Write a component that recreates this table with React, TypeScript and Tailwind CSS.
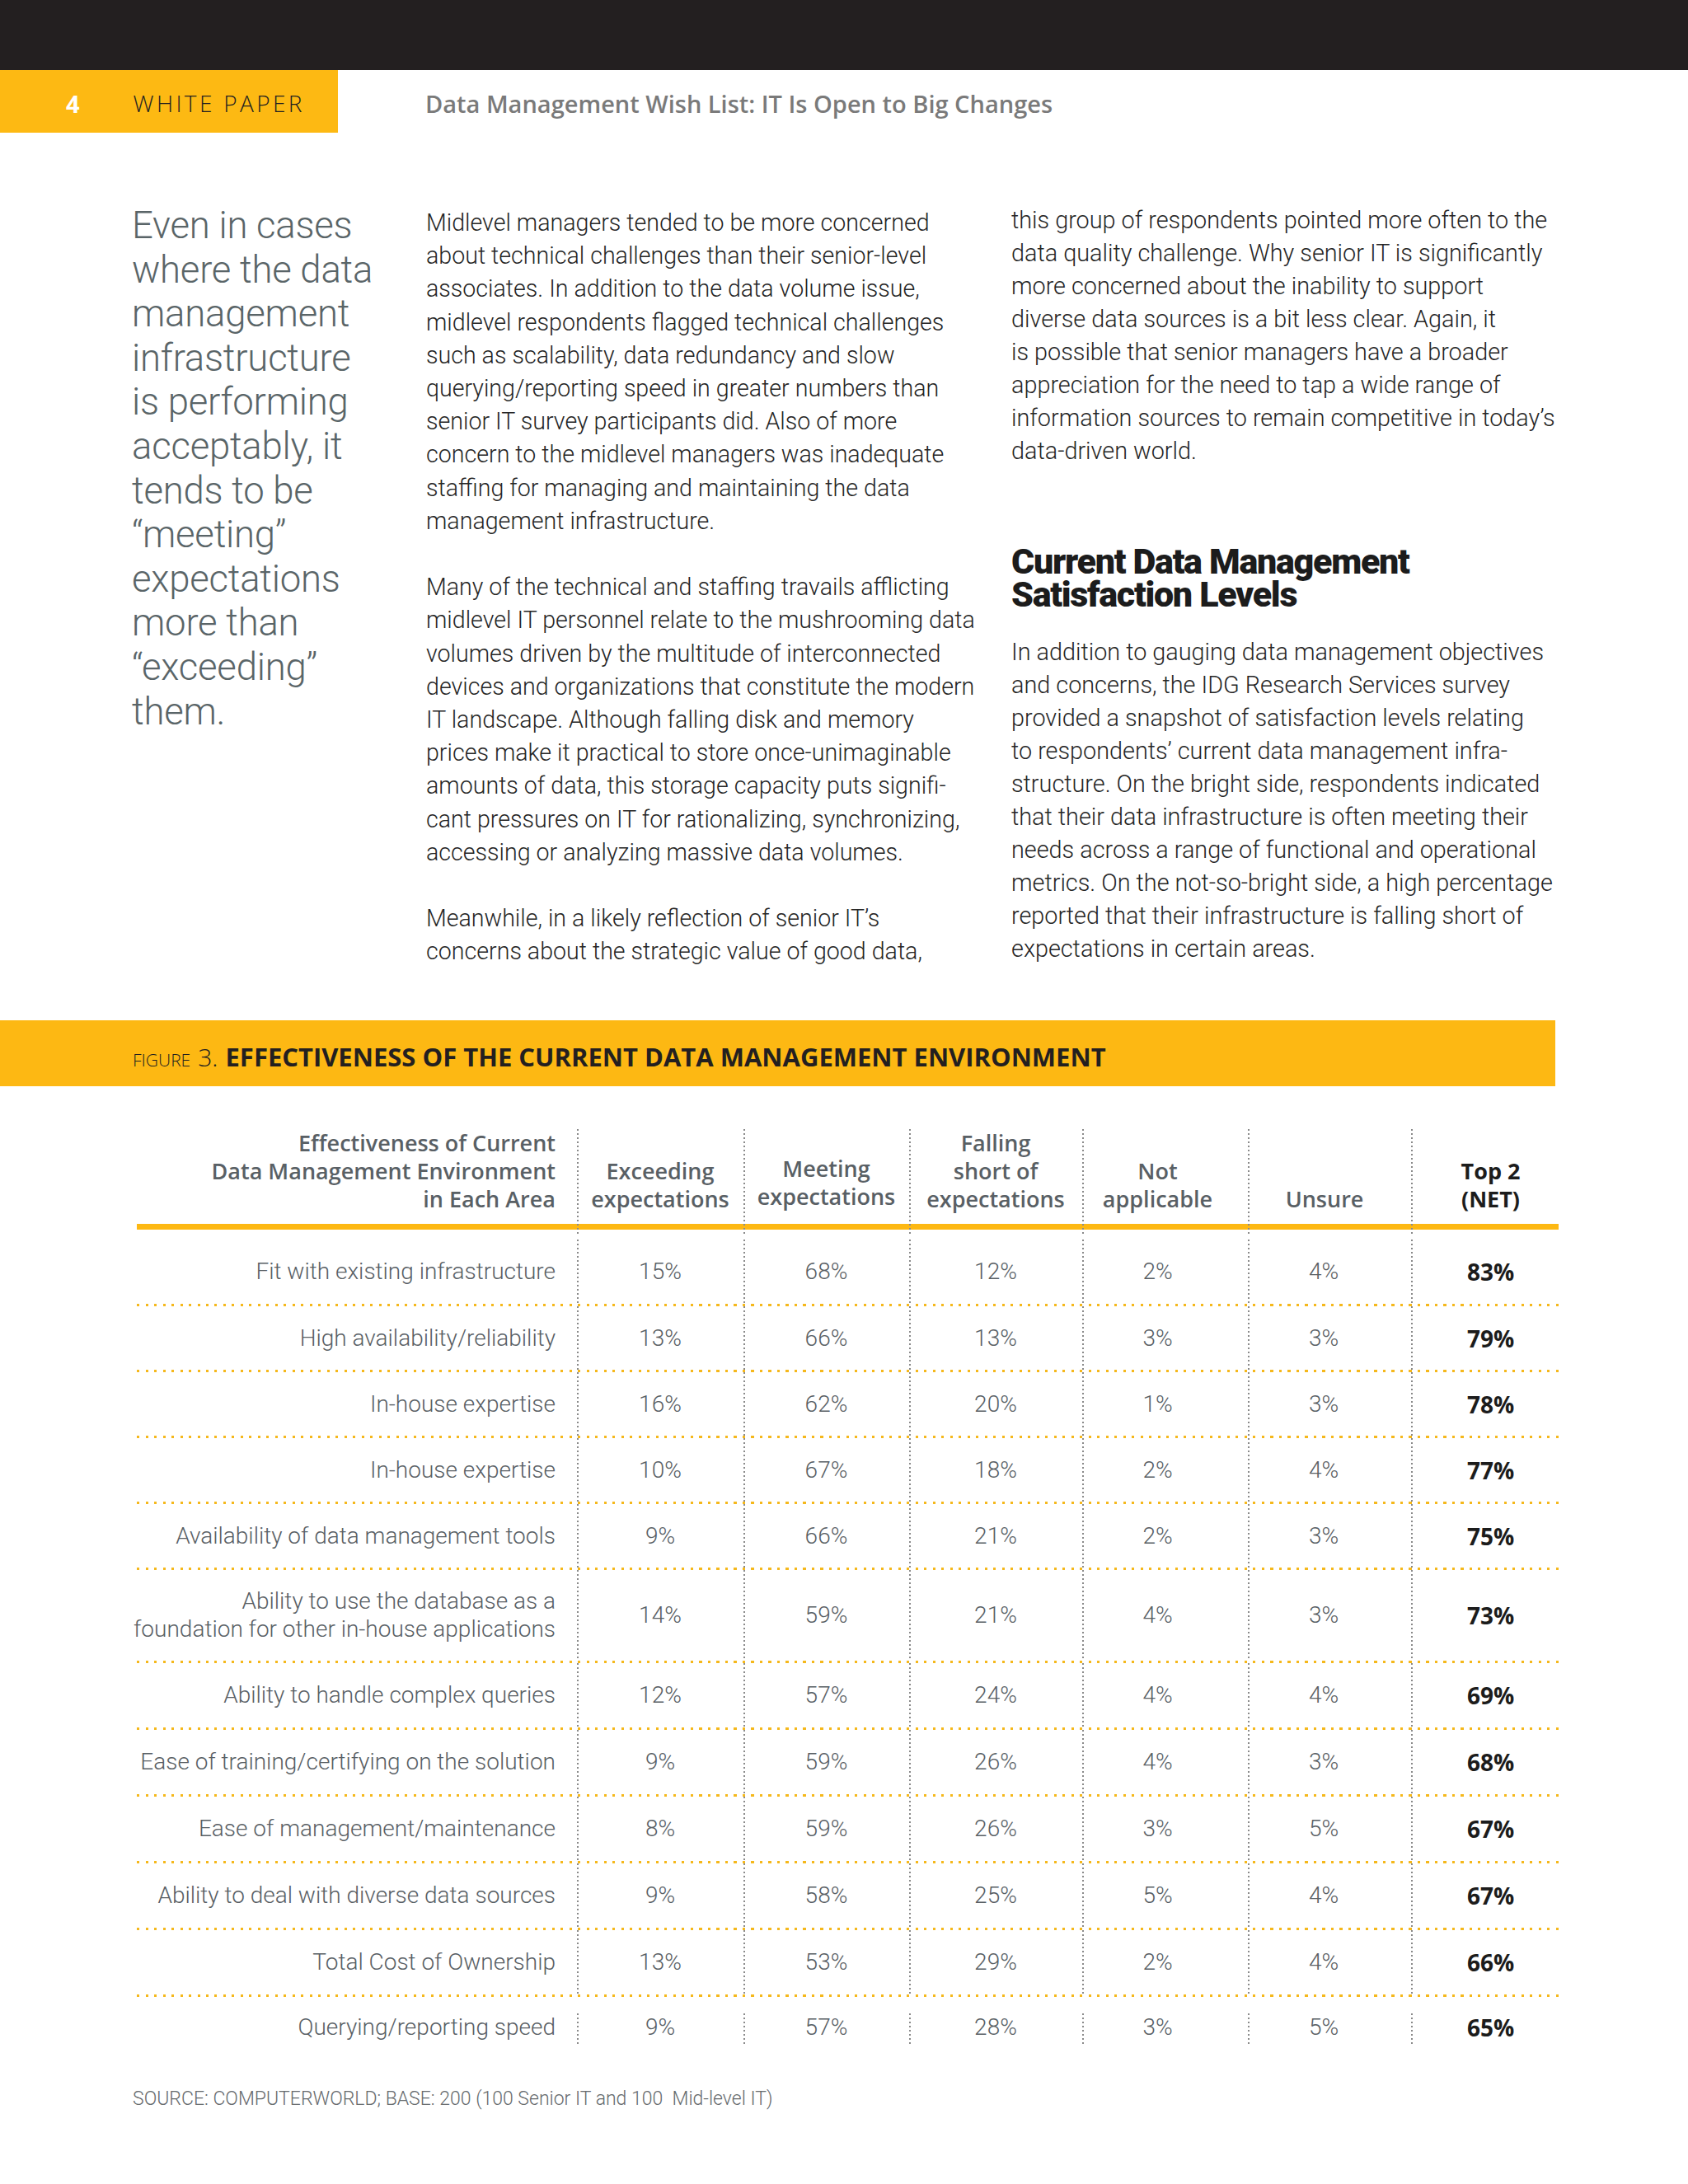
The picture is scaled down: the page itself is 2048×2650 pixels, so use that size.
import React from "react";

const pullQuote = [
  "Even in cases",
  "where the data",
  "management",
  "infrastructure",
  "is performing",
  "acceptably, it",
  "tends to be",
  "\u201Cmeeting\u201D",
  "expectations",
  "more than",
  "\u201Cexceeding\u201D",
  "them.",
];

const col2 = [
  [
    "Midlevel managers tended to be more concerned",
    "about technical challenges than their senior-level",
    "associates. In addition to the data volume issue,",
    "midlevel respondents flagged technical challenges",
    "such as scalability, data redundancy and slow",
    "querying/reporting speed in greater numbers than",
    "senior IT survey participants did. Also of more",
    "concern to the midlevel managers was inadequate",
    "staffing for managing and maintaining the data",
    "management infrastructure.",
  ],
  [
    "Many of the technical and staffing travails afflicting",
    "midlevel IT personnel relate to the mushrooming data",
    "volumes driven by the multitude of interconnected",
    "devices and organizations that constitute the modern",
    "IT landscape. Although falling disk and memory",
    "prices make it practical to store once-unimaginable",
    "amounts of data, this storage capacity puts signifi-",
    "cant pressures on IT for rationalizing, synchronizing,",
    "accessing or analyzing massive data volumes.",
  ],
  [
    "Meanwhile, in a likely reflection of senior IT\u2019s",
    "concerns about the strategic value of good data,",
  ],
];

const col3a = [
  "this group of respondents pointed more often to the",
  "data quality challenge. Why senior IT is significantly",
  "more concerned about the inability to support",
  "diverse data sources is a bit less clear. Again, it",
  "is possible that senior managers have a broader",
  "appreciation for the need to tap a wide range of",
  "information sources to remain competitive in today\u2019s",
  "data-driven world.",
];

const col3b = [
  "In addition to gauging data management objectives",
  "and concerns, the IDG Research Services survey",
  "provided a snapshot of satisfaction levels relating",
  "to respondents\u2019 current data management infra-",
  "structure. On the bright side, respondents indicated",
  "that their data infrastructure is often meeting their",
  "needs across a range of functional and operational",
  "metrics. On the not-so-bright side, a high percentage",
  "reported that their infrastructure is falling short of",
  "expectations in certain areas.",
];

type Row = { label: string[]; v: string[]; top: string; h: string };

const rows: Row[] = [
  { label: ["Fit with existing infrastructure"], v: ["15%", "68%", "12%", "2%", "4%"], top: "83%", h: "h-[90px] pt-[12px]" },
  { label: ["High availability/reliability"], v: ["13%", "66%", "13%", "3%", "3%"], top: "79%", h: "h-[77px]" },
  { label: ["In-house expertise"], v: ["16%", "62%", "20%", "1%", "3%"], top: "78%", h: "h-[77px]" },
  { label: ["In-house expertise"], v: ["10%", "67%", "18%", "2%", "4%"], top: "77%", h: "h-[77px]" },
  { label: ["Availability of data management tools"], v: ["9%", "66%", "21%", "2%", "3%"], top: "75%", h: "h-[77px]" },
  { label: ["Ability to use the database as a", "foundation for other in-house applications"], v: ["14%", "59%", "21%", "4%", "3%"], top: "73%", h: "h-[110px]" },
  { label: ["Ability to handle complex queries"], v: ["12%", "57%", "24%", "4%", "4%"], top: "69%", h: "h-[78px]" },
  { label: ["Ease of training/certifying on the solution"], v: ["9%", "59%", "26%", "4%", "3%"], top: "68%", h: "h-[78px]" },
  { label: ["Ease of management/maintenance"], v: ["8%", "59%", "26%", "3%", "5%"], top: "67%", h: "h-[78px]" },
  { label: ["Ability to deal with diverse data sources"], v: ["9%", "58%", "25%", "5%", "4%"], top: "67%", h: "h-[78px]" },
  { label: ["Total Cost of Ownership"], v: ["13%", "53%", "29%", "2%", "4%"], top: "66%", h: "h-[78px]" },
  { label: ["Querying/reporting speed"], v: ["9%", "57%", "28%", "3%", "5%"], top: "65%", h: "h-[59px] items-start pt-[20px]" },
];

const GRID = "grid grid-cols-[534px_202px_201px_210px_201px_198px_179px]";
const VLINE =
  "bg-[image:repeating-linear-gradient(to_bottom,#8a8a8a_0_2px,transparent_2px_5px)] bg-[length:2px_100%] bg-no-repeat bg-left";
const valShift = ["", "", "", "pr-[18px]", "pr-[14px]"];

function DottedRule() {
  return (
    <div className="h-[3px] w-full bg-[image:repeating-linear-gradient(to_right,#f5b81c_0_3px,transparent_3px_10.5px)]" />
  );
}

export default function App() {
  return (
    <div className="w-[2048px] h-[2650px] bg-white overflow-hidden font-['Roboto',sans-serif]">
      {/* top dark bar */}
      <div className="h-[85px] bg-[#231f20]" />

      {/* header row */}
      <div className="flex h-[76px]">
        <div className="w-[410px] h-full bg-[#fdb913] flex items-center pt-[4px]">
          <span className="ml-[80px] text-white font-['Open_Sans',sans-serif] font-bold text-[29px] leading-none">4</span>
          <span className="ml-[65px] text-[#231f20] font-['Open_Sans',sans-serif] font-light text-[28px] tracking-[0.12em] leading-none">
            WHITE PAPER
          </span>
        </div>
        <div className="ml-[106px] flex items-center pt-[4px] text-[#7a7a7a] font-['Open_Sans',sans-serif] font-semibold text-[29px] leading-none">
          Data Management Wish List: IT Is Open to Big Changes
        </div>
      </div>

      {/* body columns */}
      <div className="flex h-[1077px]">
        <div className="w-[517px] pl-[160px] pt-[86px] text-[#5a6568] font-light text-[45.5px] leading-[53.6px] tracking-[-0.005em] whitespace-nowrap">
          {pullQuote.map((l, i) => (
            <div key={i}>{l}</div>
          ))}
        </div>

        <div className="w-[710px] pt-[89px] text-[#262626] font-light text-[28.6px] leading-[40.2px] whitespace-nowrap">
          {col2.map((p, pi) => (
            <div key={pi} className={pi > 0 ? "mt-[40.2px]" : ""}>
              {p.map((l, i) => (
                <div key={i}>{l}</div>
              ))}
            </div>
          ))}
        </div>

        <div className="pt-[86px] text-[#262626] font-light text-[28.8px] leading-[40px] whitespace-nowrap">
          <div>
            {col3a.map((l, i) => (
              <div key={i}>{l}</div>
            ))}
          </div>
          <div className="mt-[94px] text-[#1c1c1c] font-black text-[43px] leading-[40px] tracking-[-0.03em]">
            <div>Current Data Management</div>
            <div>Satisfaction Levels</div>
          </div>
          <div className="mt-[30px]">
            {col3b.map((l, i) => (
              <div key={i}>{l}</div>
            ))}
          </div>
        </div>
      </div>

      {/* figure bar */}
      <div className="w-[1887px] h-[80px] bg-[#fdb813] flex items-center pl-[161px] pt-[8px]">
        <div className="flex items-baseline text-[#231f20] font-['Open_Sans',sans-serif] leading-none">
          <span className="font-light text-[21px]">FIGURE</span>
          <span className="ml-[9px] font-light text-[30px]">3.</span>
          <span className="ml-[9px] font-bold text-[31px]">EFFECTIVENESS OF THE CURRENT DATA MANAGEMENT ENVIRONMENT</span>
        </div>
      </div>

      {/* table */}
      <div className="mt-[52px] ml-[166px] w-[1725px]">
        <div className={`${GRID} h-[115px] font-['Open_Sans',sans-serif] font-semibold text-[27px] leading-[34px] text-[#596065]`}>
          <div className="flex flex-col justify-end items-end pr-[26px] pb-[27px] text-right whitespace-nowrap">
            <div>Effectiveness of Current</div>
            <div>Data Management Environment</div>
            <div>in Each Area</div>
          </div>
          <div className={`${VLINE} flex flex-col justify-end items-center pb-[27px] text-center`}>
            <div>Exceeding</div>
            <div>expectations</div>
          </div>
          <div className={`${VLINE} flex flex-col justify-end items-center pb-[30px] text-center`}>
            <div>Meeting</div>
            <div>expectations</div>
          </div>
          <div className={`${VLINE} flex flex-col justify-end items-center pb-[27px] text-center`}>
            <div>Falling</div>
            <div>short of</div>
            <div>expectations</div>
          </div>
          <div className={`${VLINE} flex flex-col justify-end items-center pb-[27px] pr-[18px] text-center`}>
            <div>Not</div>
            <div>applicable</div>
          </div>
          <div className={`${VLINE} flex flex-col justify-end items-center pb-[27px] pr-[12px] text-center`}>
            <div>Unsure</div>
          </div>
          <div className={`${VLINE} flex flex-col justify-end items-center pb-[27px] pl-[14px] text-center text-[#1c1c1c] font-bold`}>
            <div>Top 2</div>
            <div>(NET)</div>
          </div>
        </div>

        <div className="h-[7px] bg-[#fdb813]" />

        {rows.map((r, ri) => (
          <div key={ri}>
            <div className={`${GRID} ${r.h} items-stretch`}>
              <div
                className={`flex ${ri === rows.length - 1 ? "items-start" : "items-center"} justify-end pr-[26px] text-right text-[#596065] font-light text-[28px] leading-[34px] whitespace-nowrap`}
              >
                <div>
                  {r.label.map((l, i) => (
                    <div key={i}>{l}</div>
                  ))}
                </div>
              </div>
              {r.v.map((v, vi) => (
                <div
                  key={vi}
                  className={`${VLINE} flex ${ri === rows.length - 1 ? "items-start" : "items-center"} justify-center ${valShift[vi]} text-[#596065] font-light text-[28px] leading-[34px]`}
                >
                  {v}
                </div>
              ))}
              <div
                className={`${VLINE} flex ${ri === rows.length - 1 ? "items-start" : "items-center"} justify-center pl-[14px] text-[#1c1c1c] font-['Open_Sans',sans-serif] font-bold text-[28px] leading-[34px]`}
              >
                {r.top}
              </div>
            </div>
            {ri < rows.length - 1 && <DottedRule />}
          </div>
        ))}
      </div>

      {/* source */}
      <div className="mt-[50px] ml-[161px] text-[#666a6d] font-light text-[23px] leading-[30px] whitespace-pre">
        SOURCE: COMPUTERWORLD; BASE: 200 (100 Senior IT and 100  Mid-level IT)
      </div>
    </div>
  );
}
